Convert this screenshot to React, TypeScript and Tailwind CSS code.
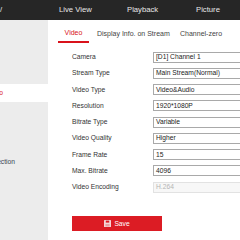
import React from 'react';

const rows: { label: string; value: string; disabled?: boolean }[] = [
    { label: 'Camera', value: '[D1] Channel 1' },
    { label: 'Stream Type', value: 'Main Stream(Normal)' },
    { label: 'Video Type', value: 'Video&Audio' },
    { label: 'Resolution', value: '1920*1080P' },
    { label: 'Bitrate Type', value: 'Variable' },
    { label: 'Video Quality', value: 'Higher' },
    { label: 'Frame Rate', value: '15' },
    { label: 'Max. Bitrate', value: '4096' },
    { label: 'Video Encoding', value: 'H.264', disabled: true },
];

function SaveIcon() {
    return (
        <svg width="7" height="7" viewBox="0 0 7 7" className="mr-[3px]">
            <rect x="0" y="0" width="7" height="7" rx="0.6" fill="#f4d6d7" />
            <rect x="1.8" y="0.6" width="3.4" height="2" fill="#dc1c24" />
            <rect x="1.4" y="4" width="4.2" height="2.4" fill="#e8a0a3" />
        </svg>
    );
}

export default function App() {
    return (
        <div className="w-[240px] h-[240px] overflow-hidden bg-white font-['Liberation_Sans',Arial,sans-serif] text-[#333]">
            {/* Top bar */}
            <div className="h-[20px] bg-[#262626] flex items-center text-[7.7px] text-[#e8e8e8] whitespace-nowrap">
                <span className="w-[59px] shrink-0 overflow-hidden">/</span>
                <span className="w-[68px] shrink-0">Live View</span>
                <span className="w-[69px] shrink-0">Playback</span>
                <span>Picture</span>
            </div>

            <div className="flex h-[220px]">
                {/* Sidebar */}
                <div className="w-[48px] shrink-0 bg-[#ececec] flex flex-col text-[6.7px] whitespace-nowrap overflow-hidden">
                    <div className="mt-[64px] h-[18px] bg-white flex items-center justify-end pr-[45px] text-[#d9121b]">
                        Video/Audio
                    </div>
                    <div className="mt-[51px] h-[18px] flex items-center justify-end pr-[33px] text-[#3a4450]">
                        Intrusion Detection
                    </div>
                </div>

                {/* Main */}
                <div className="flex-1 min-w-0 overflow-hidden flex flex-col">
                    <div className="h-[23px] flex items-stretch text-[7px] whitespace-nowrap">
                        <div className="ml-[10px] w-[31px] shrink-0 pt-[6px] flex items-center justify-center border-b-2 border-[#d9121b] text-[#d9121b]">
                            Video
                        </div>
                        <div className="ml-[8px] w-[83px] shrink-0 pt-[6px] flex items-center text-[#444]">
                            Display Info. on Stream
                        </div>
                        <div className="pt-[6px] flex items-center text-[#444]">Channel-zero</div>
                    </div>

                    <div className="mt-[6px] flex flex-col text-[6.7px] whitespace-nowrap">
                        {rows.map(r => (
                            <div key={r.label} className="h-[16.25px] flex items-center">
                                <span className="ml-[24px] w-[81px] shrink-0 text-[#333]">{r.label}</span>
                                <div
                                    className={`h-[11px] w-[100px] shrink-0 flex items-center pl-[2px] border ${r.disabled
                                        ? 'border-[#e2e2e2] bg-[#f7f7f7] text-[#b5b5b5]'
                                        : 'border-[#a9a9a9] bg-white text-[#222]'
                                        }`}
                                >
                                    {r.value}
                                </div>
                            </div>
                        ))}
                    </div>

                    <button className="mt-[21px] ml-[24px] w-[90px] h-[15px] shrink-0 bg-[#dc1c24] text-white text-[6.7px] flex items-center justify-center">
                        <SaveIcon />
                        Save
                    </button>
                </div>
            </div>
        </div>
    );
}
